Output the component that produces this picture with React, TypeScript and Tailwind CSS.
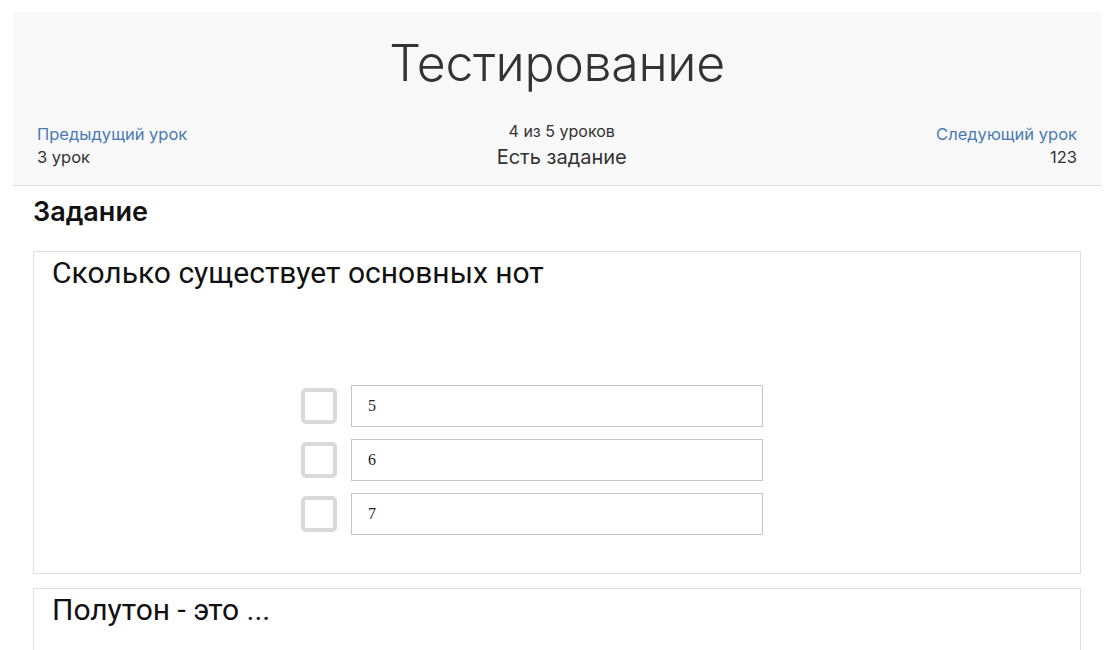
const options = ["5", "6", "7"];

const Header = () => (
  <div className="bg-[#f8f8f8] border-b border-[#dedede] px-[24px] pt-[21px] pb-[16px]">
    <h1 className="text-center text-[50px] leading-[1.2] font-light text-[#333] tracking-[-0.3px]">
      Тестирование
    </h1>
    <div className="mt-[27px] flex items-end justify-between">
      <div className="text-[16.5px] leading-[23px]">
        <a className="block text-[#4a7ab4]">Предыдущий урок</a>
        <div className="text-[#333]">3 урок</div>
      </div>
      <div className="text-center text-[#333]">
        <div className="text-[16px] leading-[22px] mb-[4px]">4 из 5 уроков</div>
        <div className="text-[20px] leading-[23px]">Есть задание</div>
      </div>
      <div className="text-right text-[16.5px] leading-[23px]">
        <a className="block text-[#4a7ab4]">Следующий урок</a>
        <div className="text-[#333]">123</div>
      </div>
    </div>
  </div>
);

const Option = ({ value }: { value: string }) => (
  <div className="grid grid-cols-[1fr_412px_1fr] items-center">
    <div className="justify-self-end mr-[14px] h-[36px] w-[36px] rounded-[5px] border-[4px] border-[#d9d9d9] bg-white" />
    <div className="flex h-[42px] items-center border border-[#c8c8c8] bg-white px-[16px] text-[16px] text-[#222] font-['Liberation_Serif',serif]">
      {value}
    </div>
    <div />
  </div>
);

export default function App() {
  return (
    <div className="min-h-screen bg-white font-['Inter',sans-serif]">
      <div className="ml-[13px] mr-[19px] pt-[12px]">
        <Header />
        <div className="px-[20px]">
          <h2 className="mt-[10px] text-[27px] leading-[32px] font-semibold text-[#111]">Задание</h2>

          <div className="mt-[23px] border border-[#dedede] px-[18px] pb-[38px]">
            <p className="text-[30px] leading-[28px] pt-[7px] text-[#111] font-['Roboto',sans-serif]">
              Сколько существует основных нот
            </p>
            <div className="mt-[98px] flex flex-col gap-[12px]">
              {options.map((o) => (
                <Option key={o} value={o} />
              ))}
            </div>
          </div>

          <div className="mt-[14px] border border-[#dedede] px-[18px] pb-[60px]">
            <p className="text-[30px] leading-[28px] pt-[7px] text-[#111] font-['Roboto',sans-serif]">
              Полутон - это ...
            </p>
          </div>
        </div>
      </div>
    </div>
  );
}
